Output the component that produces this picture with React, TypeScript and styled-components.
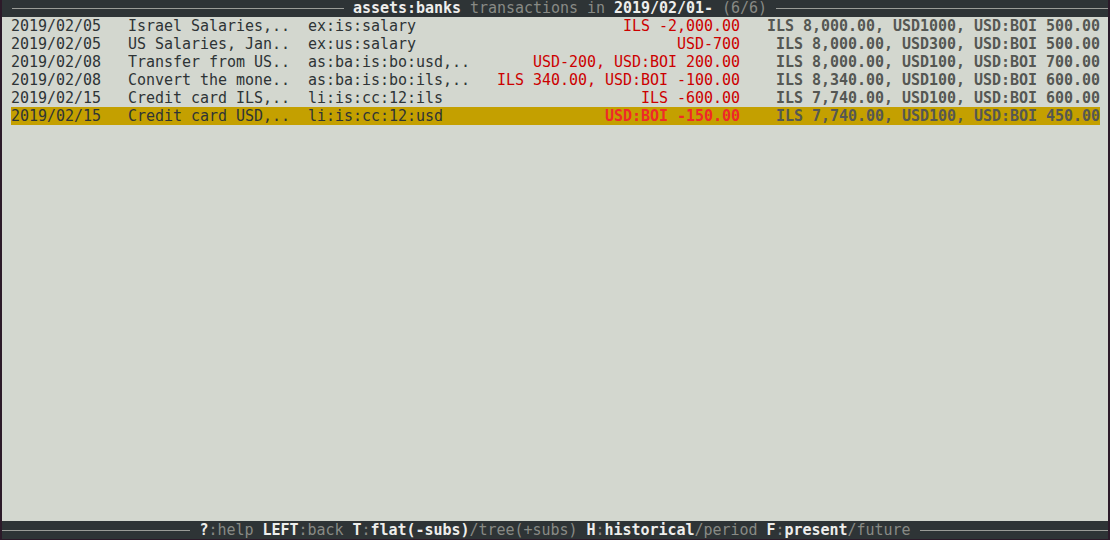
import React from "react";
import styled, { createGlobalStyle } from "styled-components";

const CH = 9;

const GlobalStyle = createGlobalStyle`
  html, body { margin: 0; padding: 0; background: #2c1a29; }
  body { font-family: "DejaVu Sans Mono", "Liberation Mono", monospace; }
`;

const Screen = styled.div`
  width: 1110px;
  height: 540px;
  box-sizing: border-box;
  border-left: 2px solid #2c1a29;
  border-right: 2px solid #2c1a29;
  border-bottom: 1px solid #2c1a29;
  background: #d3d7cf;
  display: flex;
  flex-direction: column;
  font-family: "DejaVu Sans Mono", "Liberation Mono", monospace;
  font-size: 15px;
  letter-spacing: -0.03px;
  line-height: 18px;
  white-space: pre;
  overflow: hidden;
`;

const Bar = styled.div<{ $shift?: number }>`
  height: 17px;
  flex: none;
  background: #2e3436;
  display: flex;
  align-items: center;
  padding-left: ${(p) => p.$shift ?? 0}px;
  color: #888a85;
  line-height: 17px;
`;

const BottomBar = styled(Bar)`
  height: 18px;
  line-height: 18px;
`;

const Rule = styled.div`
  flex: 1;
  height: 1px;
  background: #9a9c97;
`;

const BarText = styled.div`
  padding: 0 ${CH}px;
`;

const Strong = styled.span`
  color: #eeeeec;
  font-weight: bold;
`;

const Dim = styled.span`
  color: #888a85;
`;

const List = styled.div`
  flex: 1;
  padding: 0 ${CH}px;
`;

const Row = styled.div<{ $selected?: boolean }>`
  display: grid;
  grid-template-columns: ${10 * CH}px ${3 * CH}px ${18 * CH}px ${2 * CH}px ${18 * CH}px ${30 * CH}px ${40 * CH}px;
  height: 18px;
  width: ${121 * CH}px;
  background: ${(p) => (p.$selected ? "#c4a000" : "transparent")};
  color: #2e3436;
`;

const Cell = styled.span<{ $col: number }>`
  grid-column: ${(p) => p.$col};
  overflow: hidden;
`;

const Amount = styled.span<{ $selected?: boolean }>`
  grid-column: 6;
  text-align: right;
  color: ${(p) => (p.$selected ? "#ef2929" : "#cc0000")};
  font-weight: ${(p) => (p.$selected ? "bold" : "normal")};
`;

const Balance = styled.span`
  grid-column: 7;
  text-align: right;
  color: #555753;
  font-weight: bold;
`;

type Tx = {
  date: string;
  desc: string;
  acct: string;
  amt: string;
  bal: string;
};

const rows: Tx[] = [
  { date: "2019/02/05", desc: "Israel Salaries,..", acct: "ex:is:salary", amt: "ILS -2,000.00", bal: "ILS 8,000.00, USD1000, USD:BOI 500.00" },
  { date: "2019/02/05", desc: "US Salaries, Jan..", acct: "ex:us:salary", amt: "USD-700", bal: "ILS 8,000.00, USD300, USD:BOI 500.00" },
  { date: "2019/02/08", desc: "Transfer from US..", acct: "as:ba:is:bo:usd,..", amt: "USD-200, USD:BOI 200.00", bal: "ILS 8,000.00, USD100, USD:BOI 700.00" },
  { date: "2019/02/08", desc: "Convert the mone..", acct: "as:ba:is:bo:ils,..", amt: "ILS 340.00, USD:BOI -100.00", bal: "ILS 8,340.00, USD100, USD:BOI 600.00" },
  { date: "2019/02/15", desc: "Credit card ILS,..", acct: "li:is:cc:12:ils", amt: "ILS -600.00", bal: "ILS 7,740.00, USD100, USD:BOI 600.00" },
  { date: "2019/02/15", desc: "Credit card USD,..", acct: "li:is:cc:12:usd", amt: "USD:BOI -150.00", bal: "ILS 7,740.00, USD100, USD:BOI 450.00" },
];

export default function App() {
  return (
    <>
      <GlobalStyle />
      <Screen>
        <Bar $shift={10}>
          <Rule />
          <BarText>
            <Strong>assets:banks</Strong>
            <Dim> transactions in </Dim>
            <Strong>2019/02/01-</Strong>
            <Dim> (6/6)</Dim>
          </BarText>
          <Rule />
        </Bar>
        <List>
          {rows.map((r, i) => {
            const sel = i === rows.length - 1;
            return (
              <Row key={i} $selected={sel}>
                <Cell $col={1}>{r.date}</Cell>
                <Cell $col={3}>{r.desc}</Cell>
                <Cell $col={5}>{r.acct}</Cell>
                <Amount $selected={sel}>{r.amt}</Amount>
                <Balance>{r.bal}</Balance>
              </Row>
            );
          })}
        </List>
        <BottomBar $shift={0}>
          <Rule />
          <BarText>
            <Strong>?</Strong>
            <Dim>:help </Dim>
            <Strong>LEFT</Strong>
            <Dim>:back </Dim>
            <Strong>T</Strong>
            <Dim>:</Dim>
            <Strong>flat(-subs)</Strong>
            <Dim>/tree(+subs) </Dim>
            <Strong>H</Strong>
            <Dim>:</Dim>
            <Strong>historical</Strong>
            <Dim>/period </Dim>
            <Strong>F</Strong>
            <Dim>:</Dim>
            <Strong>present</Strong>
            <Dim>/future</Dim>
          </BarText>
          <Rule />
        </BottomBar>
      </Screen>
    </>
  );
}
